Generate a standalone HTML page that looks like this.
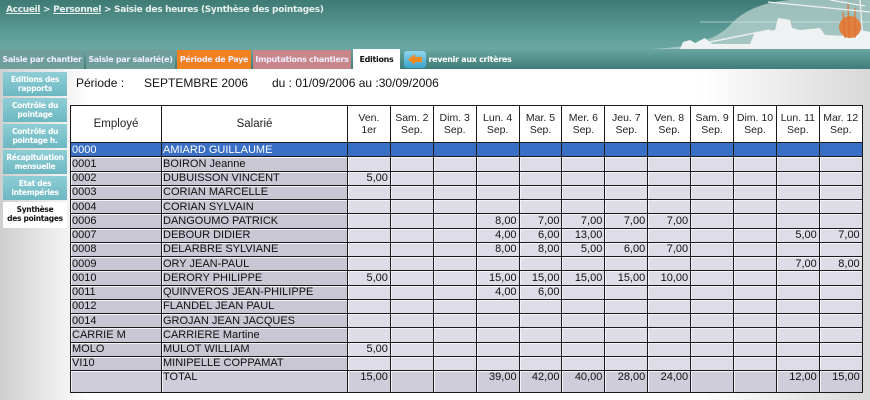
<!DOCTYPE html>
<html><head><meta charset="utf-8"><style>
*{margin:0;padding:0;box-sizing:border-box}
body{width:870px;height:400px;overflow:hidden;position:relative;font-family:"Liberation Sans",sans-serif;background:linear-gradient(90deg,#cfcfcf 0px,#fff 90px,#fff 700px,#d8d8d8 870px)}
#hdr{position:absolute;left:0;top:0;width:870px;height:49px;background:linear-gradient(180deg,#3f7a74 0%,#5e9d98 70%,#6aa7a2 100%)}
#crumb{position:absolute;left:6px;top:5px;font-size:9px;font-weight:bold;color:#e8f0ef;font-family:"DejaVu Sans",sans-serif;letter-spacing:-0.3px}
#crumb u{color:#e8f0ef}
#tabs{position:absolute;left:0;top:49px;width:870px;height:20px;background:linear-gradient(180deg,#6aa6a1,#3f7d78)}
.tab{position:absolute;top:1px;height:19px;font-family:"DejaVu Sans",sans-serif;font-size:8px;font-weight:bold;line-height:19px;text-align:center;color:#eef;letter-spacing:-0.3px}
#side{position:absolute;left:3px;top:72px;width:64px}
.si{height:24px;margin-bottom:2px;background:linear-gradient(180deg,#8fcdd5,#6db8c2);color:#fff;font-family:"DejaVu Sans",sans-serif;font-size:7.5px;font-weight:bold;text-align:center;line-height:9px;padding-top:3px;letter-spacing:-0.3px}
#per{position:absolute;top:76px;font-size:12px;color:#111}
table{position:absolute;left:70px;top:105px;width:792px;border-collapse:collapse;table-layout:fixed;font-size:11px;color:#111}
td,th{border:1px solid #1a1a1a;overflow:hidden;white-space:nowrap;padding:0 2px}
th{background:#fff;font-weight:normal;height:37px;font-size:10.5px;line-height:12px;text-align:center;color:#222}
th.b{font-size:11.5px}
td{height:14.25px;background:#dedce7;text-align:right;line-height:12px;box-shadow:inset 1px 1px 0 #f4f4f8}
td.l{text-align:left;background:#c9c7d3;padding:0 1px}
tr.sel td{background:#3a6fc6;color:#fff;box-shadow:none}
tr.tot td{height:22px;vertical-align:top;background:#cfcdd9}
</style></head><body>
<div id="hdr">
<div id="crumb"><u>Accueil</u> &gt; <u>Personnel</u> &gt; Saisie des heures (Synthèse des pointages)</div>
<svg style="position:absolute;left:650px;top:0" width="220" height="49"><path d="M0 49 Q60 47 80 25 Q100 3 140 0 L220 0 L220 49Z" fill="#b4cfcc" opacity=".8"/><path d="M50 22 L220 22" stroke="#d8e6e4" stroke-width="1" opacity=".6"/><path d="M30 49 L33 42 L40 40 L45 43 L55 38 L62 44 L100 44 L105 32 L125 30 L128 18 L140 20 L142 28 L150 30 L170 28 L175 35 L200 36 L210 30 L220 32 L220 49Z" fill="#eef2f2"/><circle cx="200" cy="27" r="11" fill="#e08040"/><path d="M193 12 L195 38 M198 4 L199 38 M205 8 L205 38" stroke="#e07030" stroke-width="1.2"/><path d="M118 2 L220 12 M180 0 L215 6 M210 0 L213 40" stroke="#f0f0f0" stroke-width="1.2"/><path d="M60 42 L120 30" stroke="#eee" stroke-width="1.5"/></svg>
</div>
<div id="tabs">
<div class="tab" style="left:0;width:84px;background:#6f9e9a">Saisie par chantier</div>
<div class="tab" style="left:86px;width:89px;background:#6f9e9a">Saisie par salarié(e)</div>
<div class="tab" style="left:177px;width:74px;background:#f08020">Période de Paye</div>
<div class="tab" style="left:253px;width:98px;background:#c9868a">Imputations chantiers</div>
<div class="tab" style="left:353px;width:47px;background:#fff;color:#111;top:0;height:21px;line-height:21px">Editions</div>
<div style="position:absolute;left:404px;top:2px;width:22px;height:17px;border-radius:3px;background:linear-gradient(#8fd6ee,#3ba3cc)"><svg width="22" height="17"><path d="M4 8.5 L11 3 L11 6 L18 6 L18 11 L11 11 L11 14Z" fill="#f08a20"/></svg></div>
<div class="tab" style="left:428px;width:84px;color:#fff">revenir aux critères</div>
</div>
<div id="side">
<div class="si">Editions des<br>rapports</div>
<div class="si">Contrôle du<br>pointage</div>
<div class="si">Contrôle du<br>pointage h.</div>
<div class="si">Récapitulation<br>mensuelle</div>
<div class="si">Etat des<br>intempéries</div>
<div class="si" style="background:#fff;color:#111;height:26px">Synthèse<br>des pointages</div>
</div>
<div id="per" style="left:76px">Période :</div>
<div id="per" style="left:144px">SEPTEMBRE 2006</div>
<div id="per" style="left:272px">du : 01/09/2006 au :30/09/2006</div>
<table>
<colgroup><col style="width:91px"><col style="width:186px"><col span="12" style="width:42.9px"></colgroup>
<tr><th class="b">Employé</th><th class="b">Salarié</th><th>Ven.<br>1er</th><th>Sam. 2<br>Sep.</th><th>Dim. 3<br>Sep.</th><th>Lun. 4<br>Sep.</th><th>Mar. 5<br>Sep.</th><th>Mer. 6<br>Sep.</th><th>Jeu. 7<br>Sep.</th><th>Ven. 8<br>Sep.</th><th>Sam. 9<br>Sep.</th><th>Dim. 10<br>Sep.</th><th>Lun. 11<br>Sep.</th><th>Mar. 12<br>Sep.</th></tr>
<tr class="sel"><td class="l">0000</td><td class="l">AMIARD GUILLAUME</td><td></td><td></td><td></td><td></td><td></td><td></td><td></td><td></td><td></td><td></td><td></td><td></td></tr>
<tr><td class="l">0001</td><td class="l">BOIRON Jeanne</td><td></td><td></td><td></td><td></td><td></td><td></td><td></td><td></td><td></td><td></td><td></td><td></td></tr>
<tr><td class="l">0002</td><td class="l">DUBUISSON VINCENT</td><td>5,00</td><td></td><td></td><td></td><td></td><td></td><td></td><td></td><td></td><td></td><td></td><td></td></tr>
<tr><td class="l">0003</td><td class="l">CORIAN MARCELLE</td><td></td><td></td><td></td><td></td><td></td><td></td><td></td><td></td><td></td><td></td><td></td><td></td></tr>
<tr><td class="l">0004</td><td class="l">CORIAN SYLVAIN</td><td></td><td></td><td></td><td></td><td></td><td></td><td></td><td></td><td></td><td></td><td></td><td></td></tr>
<tr><td class="l">0006</td><td class="l">DANGOUMO PATRICK</td><td></td><td></td><td></td><td>8,00</td><td>7,00</td><td>7,00</td><td>7,00</td><td>7,00</td><td></td><td></td><td></td><td></td></tr>
<tr><td class="l">0007</td><td class="l">DEBOUR DIDIER</td><td></td><td></td><td></td><td>4,00</td><td>6,00</td><td>13,00</td><td></td><td></td><td></td><td></td><td>5,00</td><td>7,00</td></tr>
<tr><td class="l">0008</td><td class="l">DELARBRE SYLVIANE</td><td></td><td></td><td></td><td>8,00</td><td>8,00</td><td>5,00</td><td>6,00</td><td>7,00</td><td></td><td></td><td></td><td></td></tr>
<tr><td class="l">0009</td><td class="l">ORY JEAN-PAUL</td><td></td><td></td><td></td><td></td><td></td><td></td><td></td><td></td><td></td><td></td><td>7,00</td><td>8,00</td></tr>
<tr><td class="l">0010</td><td class="l">DERORY PHILIPPE</td><td>5,00</td><td></td><td></td><td>15,00</td><td>15,00</td><td>15,00</td><td>15,00</td><td>10,00</td><td></td><td></td><td></td><td></td></tr>
<tr><td class="l">0011</td><td class="l">QUINVEROS JEAN-PHILIPPE</td><td></td><td></td><td></td><td>4,00</td><td>6,00</td><td></td><td></td><td></td><td></td><td></td><td></td><td></td></tr>
<tr><td class="l">0012</td><td class="l">FLANDEL JEAN PAUL</td><td></td><td></td><td></td><td></td><td></td><td></td><td></td><td></td><td></td><td></td><td></td><td></td></tr>
<tr><td class="l">0014</td><td class="l">GROJAN JEAN JACQUES</td><td></td><td></td><td></td><td></td><td></td><td></td><td></td><td></td><td></td><td></td><td></td><td></td></tr>
<tr><td class="l">CARRIE M</td><td class="l">CARRIERE Martine</td><td></td><td></td><td></td><td></td><td></td><td></td><td></td><td></td><td></td><td></td><td></td><td></td></tr>
<tr><td class="l">MOLO</td><td class="l">MULOT WILLIAM</td><td>5,00</td><td></td><td></td><td></td><td></td><td></td><td></td><td></td><td></td><td></td><td></td><td></td></tr>
<tr><td class="l">VI10</td><td class="l">MINIPELLE COPPAMAT</td><td></td><td></td><td></td><td></td><td></td><td></td><td></td><td></td><td></td><td></td><td></td><td></td></tr>
<tr class="tot"><td class="l"></td><td class="l">TOTAL</td><td>15,00</td><td></td><td></td><td>39,00</td><td>42,00</td><td>40,00</td><td>28,00</td><td>24,00</td><td></td><td></td><td>12,00</td><td>15,00</td></tr>
</table>
</body></html>
